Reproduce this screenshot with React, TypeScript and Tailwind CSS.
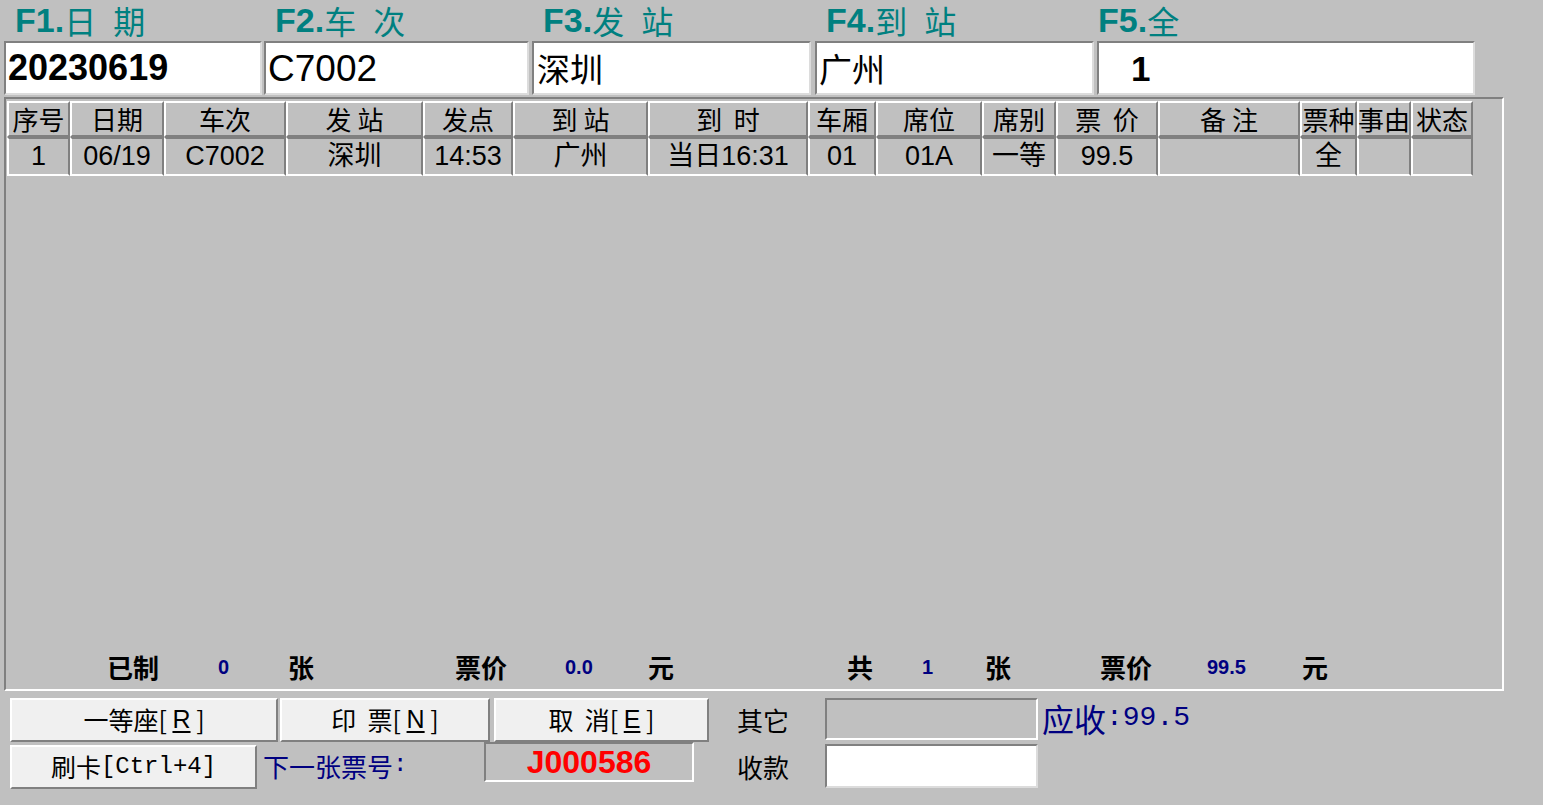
import React from 'react'

const SANS = "font-['Liberation_Sans','Noto_Sans_CJK_SC',sans-serif]"
const CJK = "font-['Noto_Sans_CJK_SC',sans-serif]"
const MONO = "font-['Liberation_Mono',monospace]"

type Col = { title: string; w: number; value: string }

const COLS: Col[] = [
  { title: '序号', w: 63, value: '1' },
  { title: '日期', w: 94, value: '06/19' },
  { title: '车次', w: 122, value: 'C7002' },
  { title: '发 站', w: 137, value: '深圳' },
  { title: '发点', w: 90, value: '14:53' },
  { title: '到 站', w: 135, value: '广州' },
  { title: '到  时', w: 160, value: '当日16:31' },
  { title: '车厢', w: 68, value: '01' },
  { title: '席位', w: 106, value: '01A' },
  { title: '席别', w: 74, value: '一等' },
  { title: '票  价', w: 102, value: '99.5' },
  { title: '备 注', w: 142, value: '' },
  { title: '票种', w: 57, value: '全' },
  { title: '事由', w: 54, value: '' },
  { title: '状态', w: 62, value: '' },
]

// top query fields
const FIELDS = [
  { key: 'F1.', label: ['日', '期'], w: 258, gap: 2, pad: 'pl-[2px]', text: '20230619', cls: `font-bold ${SANS} text-[36px]` },
  { key: 'F2.', label: ['车', '次'], w: 265, gap: 3, pad: 'pl-[2px]', text: 'C7002', cls: `${SANS} text-[37px]` },
  { key: 'F3.', label: ['发', '站'], w: 279, gap: 4, pad: 'pl-[3px]', text: '深圳', cls: `${CJK} text-[33px]` },
  { key: 'F4.', label: ['到', '站'], w: 279, gap: 3, pad: 'pl-[2px]', text: '广州', cls: `${CJK} text-[33px]` },
  { key: 'F5.', label: ['全'], w: 378, gap: 0, pad: 'pl-[32px]', text: '1', cls: `font-bold ${SANS} text-[35px]` },
]

const SUMMARY = [
  { t: '已制', w: 111, k: 'lbl' },
  { t: '0', w: 70, k: 'num' },
  { t: '张', w: 167, k: 'lbl' },
  { t: '票价', w: 110, k: 'lbl' },
  { t: '0.0', w: 83, k: 'num' },
  { t: '元', w: 199, k: 'lbl' },
  { t: '共', w: 75, k: 'lbl' },
  { t: '1', w: 63, k: 'num' },
  { t: '张', w: 115, k: 'lbl' },
  { t: '票价', w: 107, k: 'lbl' },
  { t: '99.5', w: 95, k: 'num' },
  { t: '元', w: 60, k: 'lbl' },
]

function Btn({ w, children }: { w: number; children: React.ReactNode }) {
  return (
    <div
      style={{ width: w }}
      className={`h-[44px] flex items-center justify-center whitespace-pre bg-[#f0f0f0] border-t-2 border-l-2 border-t-white border-l-white border-b-2 border-r-2 border-b-[#808080] border-r-[#808080] text-[25px] text-black ${CJK}`}
    >
      {children}
    </div>
  )
}

function Key({ k }: { k: string }) {
  return <span className="underline underline-offset-[3px] font-['Liberation_Sans',sans-serif]">{k}</span>
}

export default function App() {
  return (
    <div className={`w-[1543px] h-[805px] bg-[#c0c0c0] overflow-hidden ${SANS}`}>
      {/* labels */}
      <div className="flex h-[41px] pl-[4px]">
        {FIELDS.map((f, i) => (
          <div
            key={f.key}
            style={{ width: f.w + f.gap }}
            className={`flex items-center h-[40px] leading-none text-[#008080] ${i === 4 ? 'pl-[1px]' : 'pl-[11px]'}`}
          >
            <span className={`text-[34px] leading-none font-bold ${SANS}`}>{f.key}</span>
            {f.label.map((c, j) => (
              <span key={j} className={`text-[32px] leading-none ${CJK} ${j > 0 ? 'ml-[17px]' : ''}`}>{c}</span>
            ))}
          </div>
        ))}
      </div>

      {/* inputs */}
      <div className="flex pl-[4px] h-[55px]">
        {FIELDS.map(f => (
          <div key={f.key} style={{ width: f.w + f.gap }} className="h-[55px]">
            <div
              style={{ width: f.w }}
              className={`h-[54px] bg-white border-t-2 border-l-2 border-t-[#808080] border-l-[#808080] border-b-2 border-r-2 border-b-[#dcdcdc] border-r-[#dcdcdc] flex items-center ${f.pad}`}
            >
              <span className={`text-black leading-none ${f.cls}`}>{f.text}</span>
            </div>
          </div>
        ))}
      </div>

      {/* main panel */}
      <div className="ml-[4px] mt-[1px] w-[1500px] h-[594px] border-t-2 border-l-2 border-t-[#808080] border-l-[#808080] border-b-2 border-r-2 border-b-white border-r-white flex flex-col pt-[2px] pl-[1px]">
        <div className="flex">
          {COLS.map(c => (
            <div
              key={c.title}
              style={{ width: c.w }}
              className={`h-[36px] flex items-center justify-center border-t-2 border-l-2 border-t-white border-l-white border-b-2 border-r-2 border-b-[#808080] border-r-[#808080] text-[26px] leading-none whitespace-pre text-black ${CJK}`}
            >
              {c.title}
            </div>
          ))}
        </div>
        <div className="flex">
          {COLS.map(c => (
            <div
              key={c.title}
              style={{ width: c.w }}
              className={`h-[39px] flex items-center justify-center border-t-2 border-l-2 border-t-[#808080] border-l-white border-b-2 border-r-2 border-b-white border-r-[#808080] text-[27px] leading-none text-black ${SANS}`}
            >
              {c.value}
            </div>
          ))}
        </div>
        <div className="flex-1" />
        <div className="flex items-center h-[32px] mb-[6px] pl-[100px]">
          {SUMMARY.map((s, i) => (
            <div key={i} style={{ width: s.w }} className="leading-none">
              {s.k === 'lbl' ? (
                <span className={`text-[26px] font-bold text-black ${CJK}`}>{s.t}</span>
              ) : (
                <span className={`text-[20px] font-bold text-[#000080] ${SANS}`}>{s.t}</span>
              )}
            </div>
          ))}
        </div>
      </div>

      {/* bottom controls */}
      <div className="flex pt-[7px]">
        <div className="ml-[10px] w-[700px] flex flex-col">
          <div className="flex">
            <Btn w={268}>
              一等座[ <Key k="R" /> ]
            </Btn>
            <div className="w-[2px]" />
            <Btn w={210}>
              印  票[ <Key k="N" /> ]
            </Btn>
            <div className="w-[4px]" />
            <Btn w={215}>
              取  消[ <Key k="E" /> ]
            </Btn>
          </div>
          <div className="flex items-start">
            <div className="mt-[3px]">
              <Btn w={247}>
                刷卡<span className={`${MONO} text-[24px]`}>[Ctrl+4]</span>
              </Btn>
            </div>
            <div className={`w-[227px] pl-[6px] mt-[1px] h-[44px] flex items-center text-[26px] text-[#000080] ${CJK}`}>
              下一张票号<span className={`${MONO} text-[24px]`}>:</span>
            </div>
            <div className="w-[210px] h-[40px] bg-[#c0c0c0] border-t-2 border-l-2 border-t-[#808080] border-l-[#808080] border-b-2 border-r-2 border-b-white border-r-white flex items-center justify-center">
              <span className={`text-[32px] font-bold text-[#ff0000] leading-none ${SANS}`}>J000586</span>
            </div>
          </div>
        </div>

        <div className="ml-[27px] flex flex-col gap-[4px]">
          <div className="flex items-center">
            <div className={`w-[88px] text-[26px] text-black ${CJK}`}>其它</div>
            <div className="w-[213px] h-[42px] bg-[#c0c0c0] border-t-2 border-l-2 border-t-[#808080] border-l-[#808080] border-b-2 border-r-2 border-b-white border-r-white" />
          </div>
          <div className="flex items-center">
            <div className={`w-[88px] text-[26px] text-black ${CJK}`}>收款</div>
            <div className="w-[213px] h-[44px] bg-white border-t-2 border-l-2 border-t-[#808080] border-l-[#808080] border-b-2 border-r-2 border-b-[#dcdcdc] border-r-[#dcdcdc]" />
          </div>
        </div>

        <div className={`ml-[4px] h-[40px] flex items-center text-[32px] text-[#000080] leading-none ${CJK}`}>
          应收<span className={`${MONO} text-[28px]`}>:99.5</span>
        </div>
      </div>
    </div>
  )
}
